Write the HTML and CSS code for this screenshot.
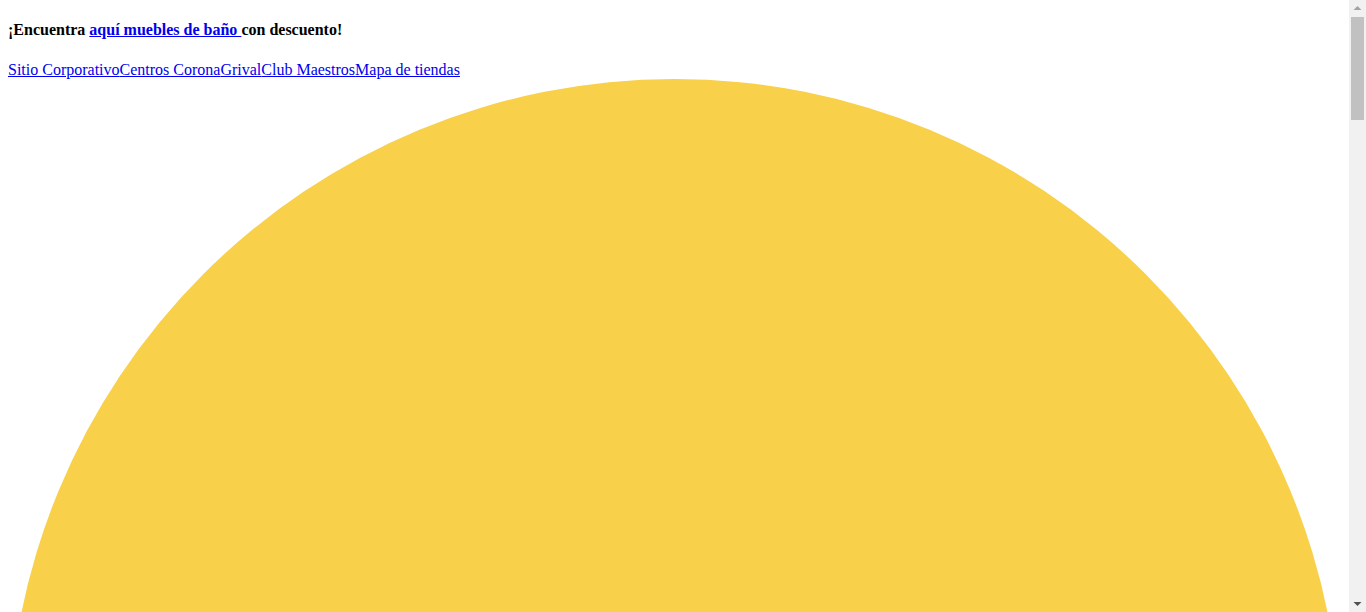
FILE: index.html
```html
<!DOCTYPE html>
<html lang="es">
<head>
<meta charset="utf-8">
<title>Corona</title>
<link rel="stylesheet" href="styles.css">
</head>
<body>
<h4 class="promo">¡Encuentra <a href="#">aquí muebles de baño </a>con descuento!</h4>
<div class="toplinks"><a href="#">Sitio Corporativo</a><a href="#">Centros Corona</a><a href="#">Grival</a><a href="#">Club Maestros</a><a href="#">Mapa de tiendas</a></div>
<svg class="sun" viewBox="0 0 100 100" xmlns="http://www.w3.org/2000/svg"><circle cx="50" cy="50" r="50" fill="#F8D049"/></svg>
<div class="rest"></div>
<div class="scrollbar" aria-hidden="true">
  <svg class="sb-arrow" width="17" height="17" viewBox="0 0 17 17"><polygon points="4.5,10 8.5,6 12.5,10" fill="#a3a3a3"/></svg>
  <div class="sb-track"><div class="sb-thumb"></div></div>
  <svg class="sb-arrow" width="17" height="17" viewBox="0 0 17 17"><polygon points="4.5,7 12.5,7 8.5,11" fill="#505050"/></svg>
</div>
</body>
</html>
```
FILE: styles.css
```css
body {
  margin: 0 25px 8px 8px;
  font-family: "Liberation Serif", "Times New Roman", serif;
}
.promo {
  font-size: 16px;
}
.sun {
  display: block;
  width: 100%;
  height: auto;
}
.rest {
  height: 2014px;
}
.scrollbar {
  position: fixed;
  top: 0;
  right: 0;
  bottom: 0;
  width: 17px;
  background: #f1f1f1;
  display: flex;
  flex-direction: column;
}
.sb-arrow {
  display: block;
  flex: none;
}
.sb-track {
  flex: 1;
  padding: 0 2px;
}
.sb-thumb {
  height: 103px;
  background: #c1c1c1;
}
```
